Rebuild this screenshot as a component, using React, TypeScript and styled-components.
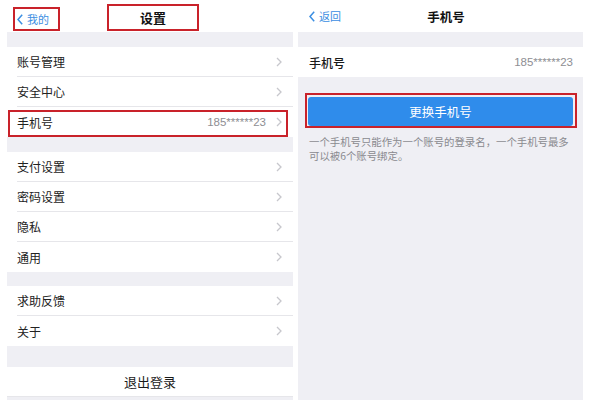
import React from "react";
import styled, { createGlobalStyle } from "styled-components";

const GlobalStyle = createGlobalStyle`
  html, body { margin: 0; padding: 0; background: #ffffff; }
  body { font-family: "Noto Sans CJK SC", "Noto Sans", sans-serif; }
  * { box-sizing: border-box; }
`;

const RED = "#c9222a";
const GREY_BG = "#efeff4";
const BLUE_LINK = "#3b8ee2";

const Page = styled.div`
  display: flex;
  gap: 5px;
  padding-left: 7px;
  width: 589px;
  height: 400px;
  overflow: hidden;
  background: #fff;
`;

const Panel = styled.div<{ $w: number }>`
  width: ${(p) => p.$w}px;
  display: flex;
  flex-direction: column;
  background: ${GREY_BG};
  flex-shrink: 0;
`;

const NavBar = styled.div<{ $pl: number; $align: string }>`
  height: 32px;
  background: #fff;
  display: grid;
  grid-template-columns: 1fr auto 1fr;
  align-items: ${(p) => p.$align};
  padding: 0 0 ${(p) => (p.$align === "end" ? 1 : 0)}px ${(p) => p.$pl}px;
`;

const BackLink = styled.div<{ $boxed?: boolean }>`
  justify-self: start;
  display: flex;
  align-items: center;
  gap: 4px;
  color: ${BLUE_LINK};
  font-size: 11px;
  height: ${(p) => (p.$boxed ? "24px" : "auto")};
  width: ${(p) => (p.$boxed ? "47px" : "auto")};
  padding-left: ${(p) => (p.$boxed ? "2px" : "0")};
  border: ${(p) => (p.$boxed ? `2px solid ${RED}` : "none")};
  svg { display: block; }
`;

const Title = styled.div<{ $boxed?: boolean; $weight: number; $size: number }>`
  justify-self: center;
  display: flex;
  align-items: center;
  justify-content: center;
  font-size: ${(p) => p.$size}px;
  font-weight: ${(p) => p.$weight};
  color: #111;
  width: ${(p) => (p.$boxed ? "92px" : "auto")};
  height: ${(p) => (p.$boxed ? "27px" : "auto")};
  border: ${(p) => (p.$boxed ? `2px solid ${RED}` : "none")};
`;

const Gap = styled.div<{ $h: number }>`
  height: ${(p) => p.$h}px;
  background: ${GREY_BG};
  flex-shrink: 0;
`;

const Row = styled.div<{ $pl: number }>`
  position: relative;
  height: 30px;
  background: #fff;
  padding-left: ${(p) => p.$pl}px;
  display: flex;
  flex-shrink: 0;
`;

const RowBody = styled.div<{ $last?: boolean; $pr: number }>`
  flex: 1;
  display: flex;
  align-items: center;
  padding-right: ${(p) => p.$pr}px;
  border-bottom: ${(p) => (p.$last ? "none" : "1px solid #e6e6ea")};
`;

const Label = styled.span<{ $strong?: boolean }>`
  font-size: 12px;
  color: ${(p) => (p.$strong ? "#1a1a1a" : "#222")};
  font-weight: ${(p) => (p.$strong ? 500 : 400)};
  flex: 1;
`;

const Value = styled.span<{ $mr: number }>`
  font-family: "Liberation Sans", Arial, sans-serif;
  font-size: 11.5px;
  color: #8e8e93;
  margin-right: ${(p) => p.$mr}px;
`;

const Highlight = styled.span`
  position: absolute;
  top: 3px;
  left: 1px;
  right: 5px;
  bottom: 0;
  border: 2px solid ${RED};
  pointer-events: none;
`;

const CenterRow = styled.div`
  height: 30px;
  background: #fff;
  display: flex;
  align-items: center;
  justify-content: center;
  font-size: 13px;
  color: #1a1a1a;
  border-bottom: 1px solid #e6e6ea;
  flex-shrink: 0;
`;

const ButtonFrame = styled.div`
  margin: 16px 0 0 7px;
  width: 272px;
  height: 35px;
  border: 2px solid ${RED};
  padding: 2px 2px 0 1px;
`;

const BlueButton = styled.button`
  width: 100%;
  height: 29px;
  border: none;
  border-radius: 3px;
  background: #2f8ceb;
  color: #fff;
  font-family: "Noto Sans CJK SC", sans-serif;
  font-size: 12.5px;
  display: flex;
  align-items: center;
  justify-content: center;
  padding: 0;
`;

const Note = styled.div`
  margin: 7px 0 0 0;
  padding: 0 8px 0 11px;
  display: flex;
  flex-direction: column;
`;

const NoteLine = styled.span`
  font-size: 10.4px;
  line-height: 14px;
  color: #8a8a8f;
  white-space: nowrap;
`;

const Chevron = () => (
  <svg width="6" height="10" viewBox="0 0 6 10">
    <polyline points="1,1 5,5 1,9" fill="none" stroke="#c7c7cc" strokeWidth="1.3" />
  </svg>
);

const BackChevron = () => (
  <svg width="6" height="11" viewBox="0 0 6 11">
    <polyline points="5.2,0.8 1,5.5 5.2,10.2" fill="none" stroke={BLUE_LINK} strokeWidth="1.5" />
  </svg>
);

type Item = { label: string; value?: string; highlight?: boolean };

const Section = ({ items }: { items: Item[] }) => (
  <>
    {items.map((it, i) => (
      <Row key={it.label} $pl={10}>
        <RowBody $last={i === items.length - 1} $pr={11}>
          <Label>{it.label}</Label>
          {it.value && <Value $mr={10}>{it.value}</Value>}
          <Chevron />
        </RowBody>
        {it.highlight && <Highlight />}
      </Row>
    ))}
  </>
);

export default function App() {
  return (
    <>
      <GlobalStyle />
      <Page>
        <Panel $w={286}>
          <NavBar $pl={6} $align="end">
            <BackLink $boxed>
              <BackChevron />
              <span>我的</span>
            </BackLink>
            <Title $boxed $weight={700} $size={13}>设置</Title>
            <span />
          </NavBar>
          <Gap $h={15} />
          <Section
            items={[
              { label: "账号管理" },
              { label: "安全中心" },
              { label: "手机号", value: "185******23", highlight: true },
            ]}
          />
          <Gap $h={15} />
          <Section
            items={[
              { label: "支付设置" },
              { label: "密码设置" },
              { label: "隐私" },
              { label: "通用" },
            ]}
          />
          <Gap $h={14} />
          <Section items={[{ label: "求助反馈" }, { label: "关于" }]} />
          <Gap $h={21} />
          <CenterRow>退出登录</CenterRow>
        </Panel>

        <Panel $w={285}>
          <NavBar $pl={11} $align="center">
            <BackLink>
              <BackChevron />
              <span>返回</span>
            </BackLink>
            <Title $weight={700} $size={12.5}>手机号</Title>
            <span />
          </NavBar>
          <Gap $h={15} />
          <Row $pl={11}>
            <RowBody $last $pr={10}>
              <Label $strong>手机号</Label>
              <Value $mr={0}>185******23</Value>
            </RowBody>
          </Row>
          <ButtonFrame>
            <BlueButton>更换手机号</BlueButton>
          </ButtonFrame>
          <Note>
            <NoteLine>一个手机号只能作为一个账号的登录名，一个手机号最多</NoteLine>
            <NoteLine>可以被6个账号绑定。</NoteLine>
          </Note>
        </Panel>
      </Page>
    </>
  );
}
